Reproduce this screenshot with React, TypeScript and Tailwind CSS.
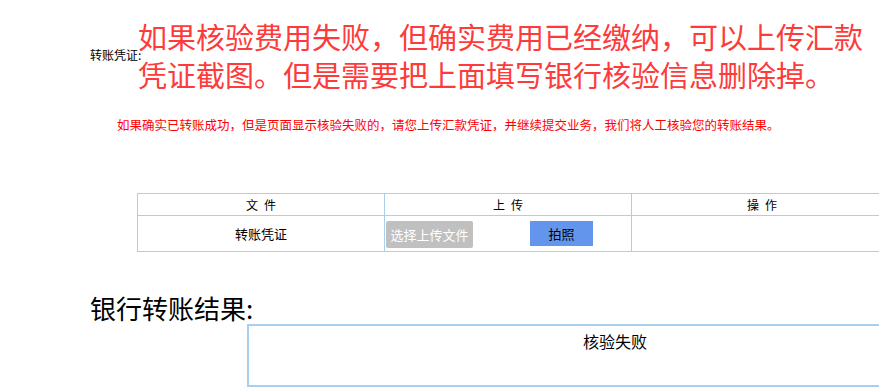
import type { FC } from 'react';

const cjk = "font-['Noto_Sans_CJK_SC',_'Noto_Sans',_sans-serif]";

const App: FC = () => {
  return (
    <div className={`w-full h-[389px] overflow-hidden bg-white text-black ${cjk}`}>
      {/* Notice */}
      <div className="flex items-start pt-[17px] pl-[90px]">
        <span className="w-[48px] shrink-0 whitespace-nowrap mt-[30px] text-[12px] leading-[16px]">转账凭证:</span>
        <p className="text-[29px] leading-[38px] text-[#fe3b3b] whitespace-nowrap">
          如果核验费用失败，但确实费用已经缴纳，可以上传汇款
          <br />
          凭证截图。但是需要把上面填写银行核验信息删除掉。
        </p>
      </div>

      <p className="mt-[24px] pl-[117px] text-[12.5px] leading-[16px] text-[#ff0000] whitespace-nowrap">
        如果确实已转账成功，但是页面显示核验失败的，请您上传汇款凭证，并继续提交业务，我们将人工核验您的转账结果。
      </p>

      {/* Upload table */}
      <div className="mt-[60px] ml-[137px] w-[756px] border-t border-l border-[#a8cfec] text-[12px]">
        <div className="grid grid-cols-[247px_247px_260px]">
          <div className="h-[22px] border-r border-b border-[#a8cfec] flex items-center justify-center gap-[6px]">
            <span>文</span>
            <span>件</span>
          </div>
          <div className="h-[22px] border-r border-b border-[#a8cfec] flex items-center justify-center gap-[6px]">
            <span>上</span>
            <span>传</span>
          </div>
          <div className="h-[22px] border-b border-[#a8cfec] flex items-center justify-center gap-[6px]">
            <span>操</span>
            <span>作</span>
          </div>

          <div className="h-[36px] border-r border-b border-[#a8cfec] flex items-center justify-center text-[13px]">
            转账凭证
          </div>
          <div className="h-[36px] border-r border-b border-[#a8cfec] flex items-start pt-[5px] pl-[1px] gap-[57px]">
            <button className="w-[87px] h-[27px] rounded-[2px] bg-[#c0c0c0] text-white text-[13px] leading-[27px]">
              选择上传文件
            </button>
            <button className="w-[63px] h-[25px] bg-[#6495ed] text-black text-[13px] leading-[25px]">
              拍照
            </button>
          </div>
          <div className="h-[36px] border-b border-[#a8cfec]"></div>
        </div>
      </div>

      {/* Result */}
      <h3 className="mt-[40px] pl-[90px] text-[26px] leading-[32px] whitespace-nowrap">银行转账结果:</h3>
      <div className="ml-[247px] w-[736px] h-[63px] border-2 border-[#a8cfec] pt-[3px] text-center text-[16px] leading-[24px]">
        核验失败
      </div>
    </div>
  );
};

export default App;
